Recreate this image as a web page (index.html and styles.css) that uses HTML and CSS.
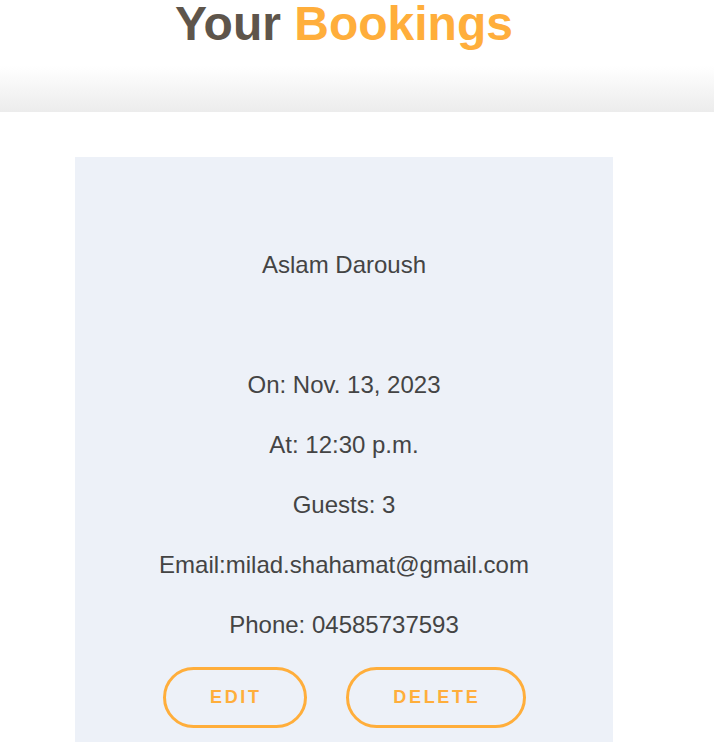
FILE: index.html
```html
<!DOCTYPE html>
<html lang="en">
<head>
<meta charset="utf-8">
<title>Your Bookings</title>
<link rel="stylesheet" href="styles.css">
</head>
<body>
<header class="page-header">
  <h1 class="title">Your <span class="accent">Bookings</span></h1>
</header>
<main class="content">
  <section class="booking-card">
    <p class="name">Aslam Daroush</p>
    <p>On: Nov. 13, 2023</p>
    <p>At: 12:30 p.m.</p>
    <p>Guests: 3</p>
    <p>Email:milad.shahamat@gmail.com</p>
    <p>Phone: 04585737593</p>
    <div class="actions">
      <a class="btn btn-edit" href="#">Edit</a>
      <a class="btn btn-delete" href="#">Delete</a>
    </div>
  </section>
</main>
</body>
</html>
```
FILE: styles.css
```css
html, body {
  margin: 0;
  padding: 0;
  background: #ffffff;
}
body {
  font-family: "Liberation Sans", Arial, sans-serif;
  color: #444444;
}
.page-header {
  height: 112px;
  background: linear-gradient(to bottom, #ffffff 0px, #ffffff 66px, #ececec 112px);
  padding-right: 26px;
}
.title {
  margin: 0;
  font-size: 48px;
  line-height: 48px;
  font-weight: 700;
  text-align: center;
  color: #5e554b;
}
.accent {
  color: #ffae3b;
}
.content {
  padding: 45px 26px 0 0;
  display: flex;
  justify-content: center;
}
.booking-card {
  width: 538px;
  background: #edf1f8;
  padding: 66px 0 60px;
  text-align: center;
  font-size: 24px;
  line-height: 1.5;
  color: #444444;
}
.booking-card p {
  margin: 24px 0;
}
.booking-card .name {
  margin-bottom: 84px;
}
.actions {
  display: flex;
  justify-content: center;
  gap: 39px;
}
.btn {
  display: inline-block;
  box-sizing: border-box;
  border: 3px solid #ffae3b;
  border-radius: 40px;
  color: #ffae3b;
  text-decoration: none;
  text-transform: uppercase;
  font-weight: 700;
  font-size: 18px;
  line-height: 27px;
  letter-spacing: 2.7px;
  padding: 14px 0 14px 2.7px;
  text-align: center;
}
.btn-edit {
  width: 144px;
}
.btn-delete {
  width: 180px;
}
```
